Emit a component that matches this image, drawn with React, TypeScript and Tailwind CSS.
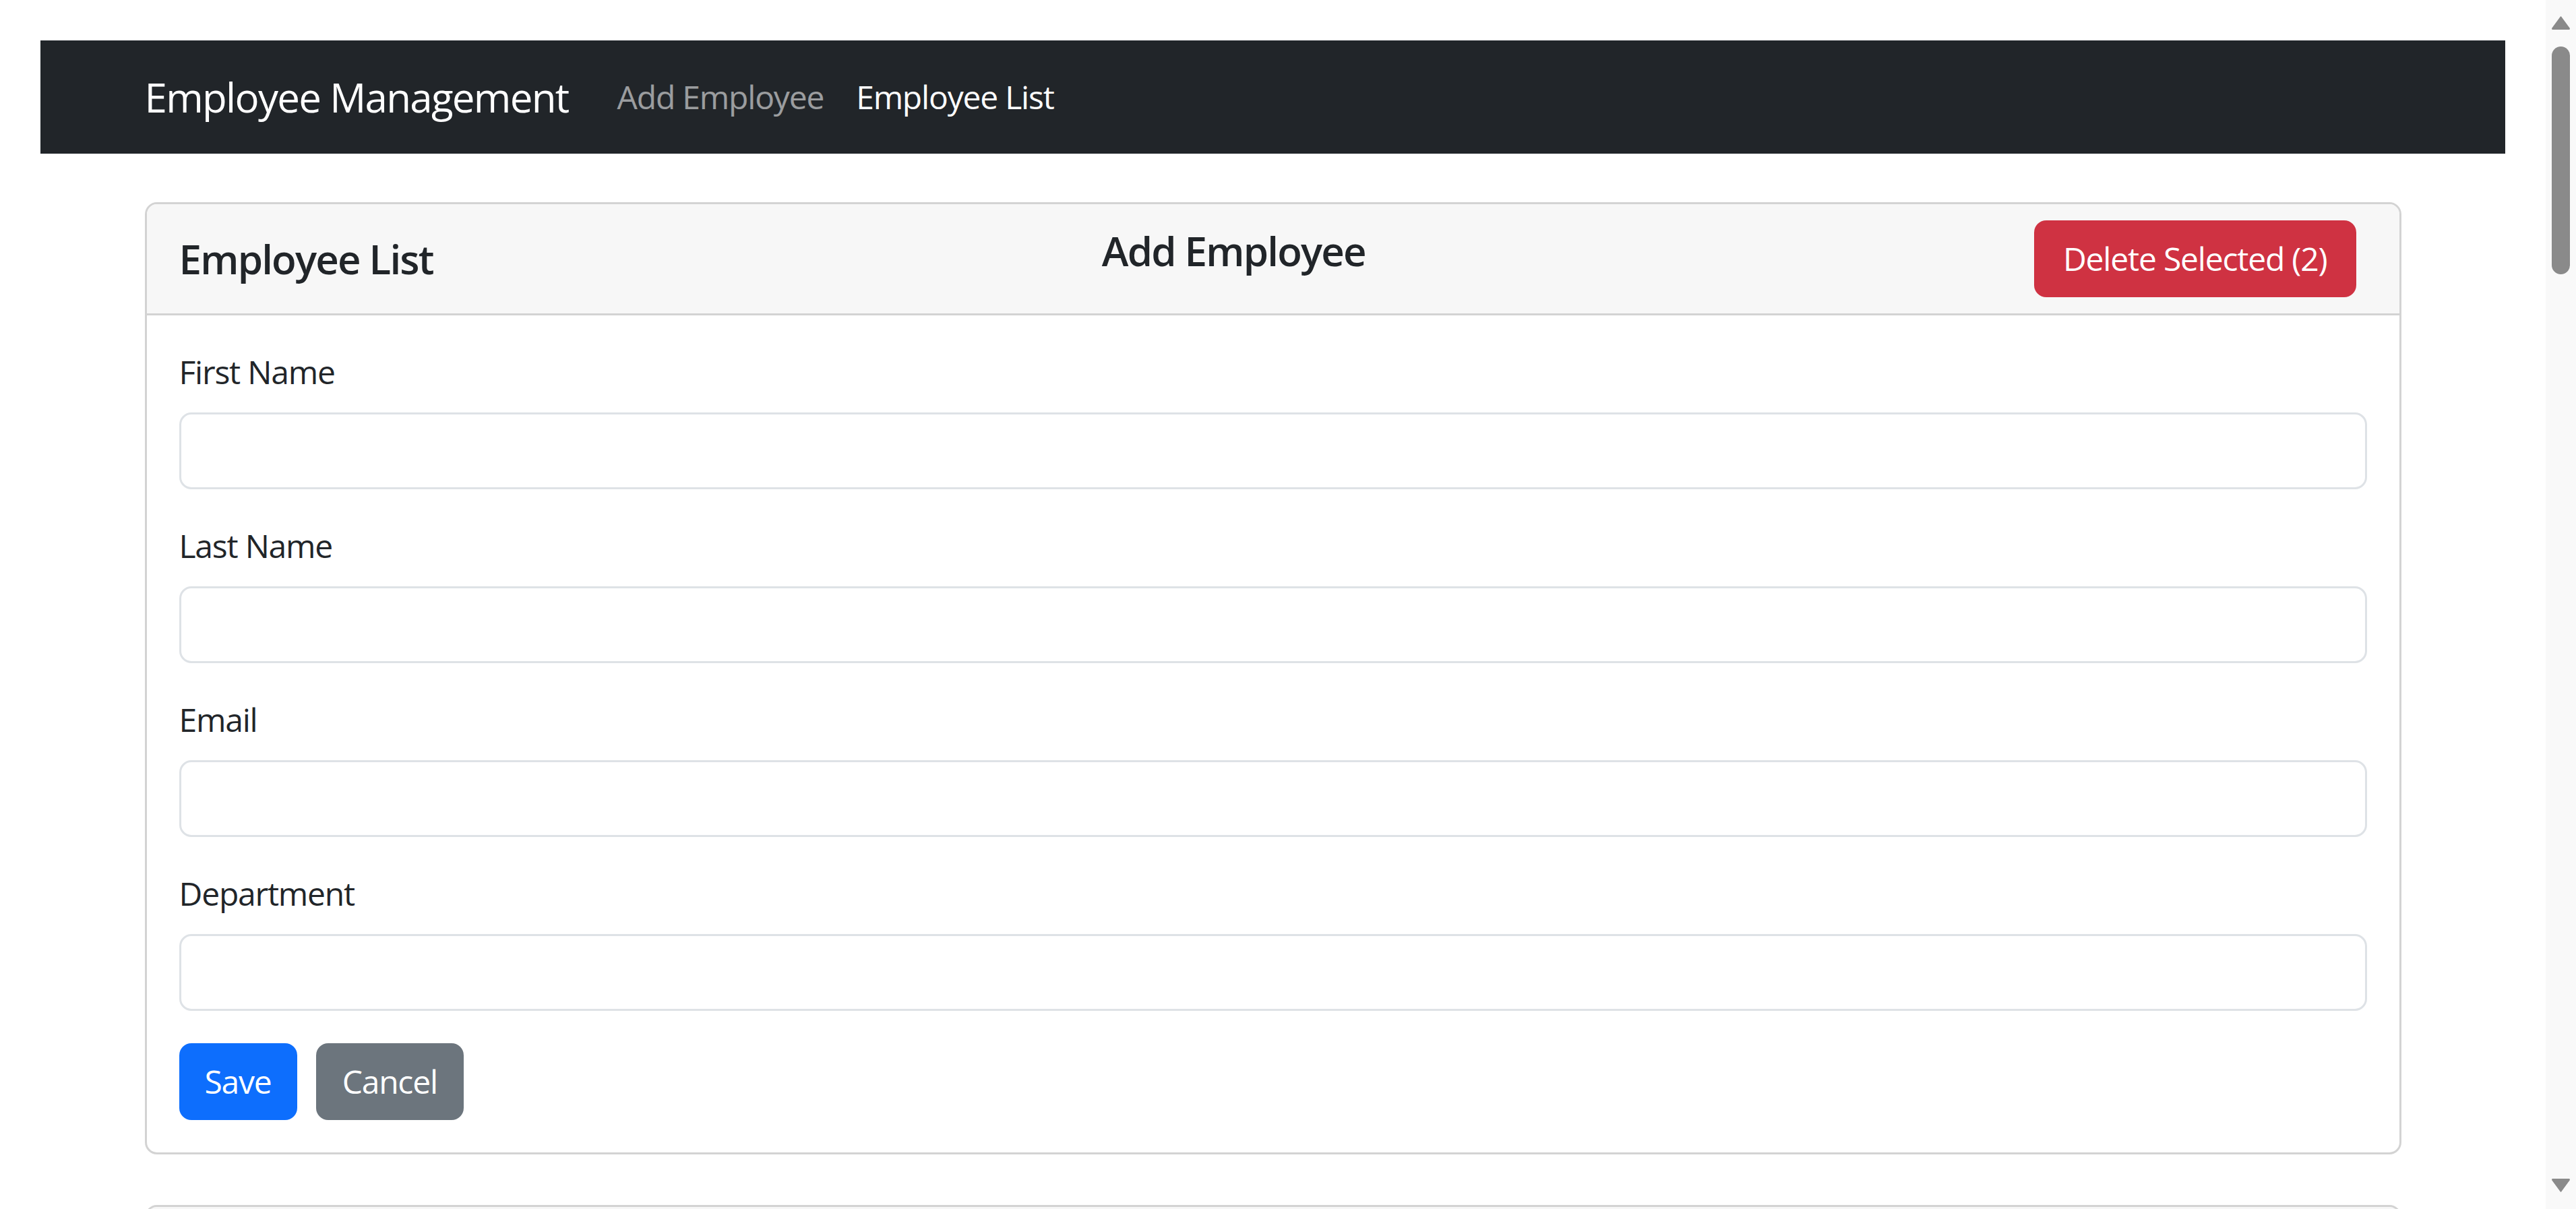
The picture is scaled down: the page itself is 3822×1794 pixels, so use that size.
const FIELDS = ['First Name', 'Last Name', 'Email', 'Department'];

function ScrollArrow({ up }: { up?: boolean }) {
  return (
    <svg width="27" height="20" viewBox="0 0 27 20" className="block">
      {up ? (
        <path d="M13.5 1 L26 18 Q26.5 19.5 25 19.5 L2 19.5 Q0.5 19.5 1 18 Z" fill="#8a8a8a" stroke="#8a8a8a" strokeWidth="1.5" strokeLinejoin="round" />
      ) : (
        <path d="M13.5 19 L26 2 Q26.5 0.5 25 0.5 L2 0.5 Q0.5 0.5 1 2 Z" fill="#8a8a8a" stroke="#8a8a8a" strokeWidth="1.5" strokeLinejoin="round" />
      )}
    </svg>
  );
}

export default function App() {
  return (
    <div className="flex h-screen overflow-hidden bg-white font-['Open_Sans',sans-serif] text-[#212529]">
      <div className="min-w-0 flex-1 overflow-hidden">
        {/* navbar */}
        <nav className="mx-[60px] mt-[60px] bg-[#212529] py-[24px]">
          <div className="mx-auto flex max-w-[3420px] items-center px-[36px]">
            <a className="mr-[48px] py-[15px] text-[60px] leading-[90px] tracking-[-0.028em] text-white">Employee Management</a>
            <a className="px-[24px] py-[24px] text-[48px] leading-[72px] tracking-[-0.025em] text-white/55">Add Employee</a>
            <a className="px-[24px] py-[24px] text-[48px] leading-[72px] tracking-[-0.025em] text-white">Employee List</a>
          </div>
        </nav>

        <div className="mx-auto mt-[72px] max-w-[3420px] px-[36px]">
          <div className="rounded-[18px] border-[3px] border-[#d3d3d3] bg-white">
            <div className="flex items-center justify-between rounded-t-[15px] border-b-[3px] border-[#d3d3d3] bg-[#f7f7f7] px-[48px] py-[24px]">
              <h5 className="text-[60px] font-semibold leading-[72px] tracking-[-0.03em]">Employee List</h5>
              <h5 className="mb-[24px] text-[60px] font-semibold leading-[74px] tracking-[-0.03em]">Add Employee</h5>
              <button className="mr-[16px] h-[114px] rounded-[18px] bg-[#cf3242] px-[43px] text-[48px] leading-[72px] tracking-[-0.025em] text-white">
                Delete Selected (2)
              </button>
            </div>
            <div className="p-[48px]">
              {FIELDS.map(f => (
                <div key={f} className="mb-[48px]">
                  <label className="mb-[24px] block text-[48px] leading-[72px] tracking-[-0.025em]">{f}</label>
                  <input className="block h-[114px] w-full rounded-[18px] border-[3px] border-[#dee2e6] bg-white px-[36px] text-[48px] outline-none" />
                </div>
              ))}
              <div className="flex gap-[28px]">
                <button className="h-[114px] rounded-[18px] bg-[#0d6efd] px-[38px] text-[48px] leading-[72px] tracking-[-0.025em] text-white">Save</button>
                <button className="h-[114px] rounded-[18px] bg-[#6c757d] px-[39px] text-[48px] leading-[72px] tracking-[-0.025em] text-white">Cancel</button>
              </div>
            </div>
          </div>

          {/* second card, only its top edge is in view */}
          <div className="mt-[75px] rounded-[18px] border-[3px] border-[#d3d3d3] bg-white">
            <div className="h-[168px] rounded-t-[15px] border-b-[3px] border-[#d3d3d3] bg-[#f7f7f7]" />
          </div>
        </div>
      </div>

      {/* scrollbar */}
      <div className="flex w-[45px] shrink-0 flex-col items-center bg-[#f9f9f9] pt-[24px]">
        <ScrollArrow up />
        <div className="mt-[25px] h-[338px] w-[27px] rounded-full bg-[#8a8a8a]" />
        <div className="flex-1" />
        <div className="mb-[25px]">
          <ScrollArrow />
        </div>
      </div>
    </div>
  );
}
